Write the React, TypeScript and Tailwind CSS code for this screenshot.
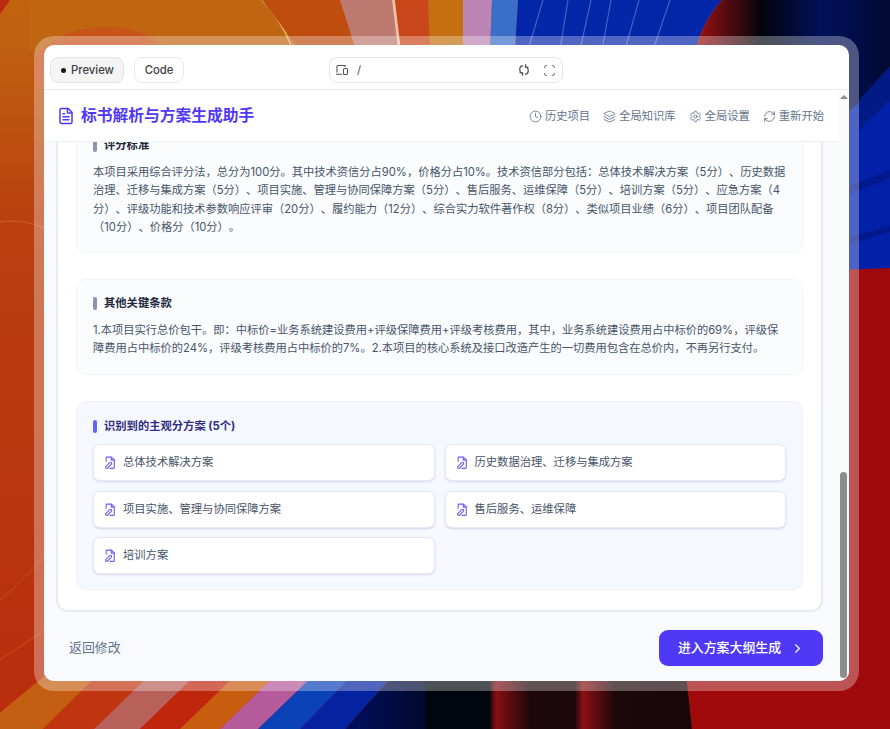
import { Clock, Layers, Settings, RefreshCw, FileText, ChevronRight, Scan } from "lucide-react";

const topBands: [string, string][] = [
  ["#bf4d10", "262,0 340,0 356,50 300,50"],
  ["#bd7a70", "340,0 392,0 398,50 356,50"],
  ["#e8c0b0", "392,0 395,0 401,50 398,50"],
  ["#c9471a", "395,0 428,0 430,50 401,50"],
  ["#c46f12", "428,0 463,0 463,50 430,50"],
  ["#bd85b5", "463,0 492,0 490,50 463,50"],
  ["#3b6ec9", "492,0 518,0 515,50 490,50"],
];
const bottomBands: [string, string][] = [
  ["#c45e12", "58,665 108,665 43,729 -20,729"],
  ["#c0350f", "108,665 160,665 94,729 43,729"],
  ["#b8605a", "160,665 206,665 140,729 94,729"],
  ["#c0260c", "206,665 246,665 180,729 140,729"],
  ["#c85c0f", "246,665 286,665 220,729 180,729"],
  ["#b55a9a", "286,665 324,665 258,729 220,729"],
  ["#0b42b8", "324,665 362,665 300,729 258,729"],
  ["#0522a0", "362,665 402,665 345,729 300,729"],
];
const blueLines = ["543,0 528,50", "568,0 560,50", "591,0 580,50", "611,0 602,50", "639,0 625,50", "670,0 653,50"];

function Background() {
  return (
    <svg className="absolute inset-0" width="890" height="729" viewBox="0 0 890 729">
      <defs>
        <linearGradient id="lo" x1="0" y1="0" x2="0" y2="1">
          <stop offset="0" stopColor="#c2620f" />
          <stop offset="0.06" stopColor="#c06010" />
          <stop offset="0.3" stopColor="#b9400f" />
          <stop offset="1" stopColor="#b92d0d" />
        </linearGradient>
        <linearGradient id="tr" x1="0" y1="0" x2="1" y2="0">
          <stop offset="0" stopColor="#a01012" />
          <stop offset="1" stopColor="#04060c" />
        </linearGradient>
        <linearGradient id="tn" x1="0" y1="0" x2="1" y2="0">
          <stop offset="0" stopColor="#02040c" />
          <stop offset="0.45" stopColor="#011058" />
          <stop offset="0.7" stopColor="#010d4c" />
          <stop offset="1" stopColor="#020a30" />
        </linearGradient>
        <linearGradient id="bn" x1="0" y1="0" x2="1" y2="0">
          <stop offset="0" stopColor="#010f62" />
          <stop offset="1" stopColor="#01060e" />
        </linearGradient>
        <linearGradient id="bs" x1="0" y1="0" x2="1" y2="0">
          <stop offset="0" stopColor="#1a0508" />
          <stop offset="0.03" stopColor="#861014" />
          <stop offset="0.2" stopColor="#1c070a" />
          <stop offset="0.42" stopColor="#1c070a" />
          <stop offset="0.46" stopColor="#8c1014" />
          <stop offset="0.62" stopColor="#1c070a" />
          <stop offset="1" stopColor="#1a0608" />
        </linearGradient>
      </defs>
      <rect width="890" height="729" fill="url(#lo)" />
      <path d="M30 0H262L300 50H30Z" fill="#c06510" />
      <path d="M0 0H10L0 14Z" fill="#bb2a10" />
      <ellipse cx="105" cy="72" rx="72" ry="45" fill="#c8541a" />
      <path d="M262 0C276 16 288 32 296 60" stroke="#e6b060" strokeWidth="1.5" fill="none" />
      {topBands.map(([c, p]) => (
        <polygon key={p} points={p} fill={c} />
      ))}
      <path d="M518 0H722C708 16 700 32 696 50H515Z" fill="#0426a8" />
      {blueLines.map((p) => (
        <polyline key={p} points={p} stroke="#3f63c4" strokeWidth="1.2" fill="none" />
      ))}
      <path d="M722 0H760V50H696C700 32 708 16 722 0Z" fill="url(#tr)" />
      <rect x="760" y="0" width="130" height="120" fill="url(#tn)" />
      <path d="M840 118L890 78V282L840 296Z" fill="#0320a8" />
      <path d="M859 100L890 66V100L859 130Z" fill="#011a86" />
      <path d="M840 190L890 170V178L840 198ZM840 240L890 226V232L840 246Z" fill="#02188c" />
      <path d="M600 280L890 268V729H600Z" fill="#a00a0c" />
      <path d="M0 222C14 220 28 221 44 228" stroke="#cf6020" strokeWidth="1" fill="none" />
      <path d="M0 600C14 588 28 575 44 556M0 660C14 650 28 642 44 630" stroke="#c6501a" strokeWidth="1" fill="none" />
      {bottomBands.map(([c, p]) => (
        <polygon key={p} points={p} fill={c} />
      ))}
      <polygon points="402,665 470,665 430,729 345,729" fill="url(#bn)" />
      <rect x="425" y="665" width="70" height="64" fill="#01060e" />
      <polygon points="490,665 685,665 692,729 490,729" fill="url(#bs)" />
    </svg>
  );
}

function Bar({ color }: { color: string }) {
  return <span className={`h-[13px] w-[4px] shrink-0 rounded-full ${color}`} />;
}

function NavItem({ icon: Icon, label }: { icon: typeof Clock; label: string }) {
  return (
    <div className="flex items-center gap-[3px] text-[11.3px] text-[#64748b]">
      <Icon size={13} strokeWidth={1.6} />
      <span>{label}</span>
    </div>
  );
}

function PlanIcon() {
  return (
    <svg width="12" height="13" viewBox="0 0 14 15" fill="none" stroke="#6a5cf6" strokeWidth="1.3" strokeLinecap="round" strokeLinejoin="round">
      <path d="M2.5 6V2.2a1 1 0 0 1 1-1h5.2L12 4.5v8.8a1 1 0 0 1-1 1H7" />
      <path d="M8.5 1.4v3.3H12" />
      <path d="M2 12.3 6.6 7.7a1.3 1.3 0 0 1 1.9 1.9L3.9 14.2H2Z" />
    </svg>
  );
}

function PlanCard({ label }: { label: string }) {
  return (
    <div className="flex h-[37px] items-center gap-[7px] rounded-[7px] border border-[#e5e9f5] bg-white pl-[10px] text-[11.3px] text-[#475569] shadow-[0_1px_2px_rgba(99,102,160,0.22)]">
      <PlanIcon />
      <span>{label}</span>
    </div>
  );
}

export default function App() {
  return (
    <div className="relative h-[729px] w-full overflow-hidden font-['Inter','Noto_Sans_CJK_SC',sans-serif] [text-spacing-trim:space-all]">
      <Background />
      <div className="relative pl-[34px] pt-[36px]">
        <div className="w-[825px] rounded-[20px] bg-white/30 px-[10px] pb-[10px] pt-[9px]">
          <div className="flex h-[636px] flex-col overflow-hidden rounded-[10px] bg-white">
            <div className="relative flex h-[45px] shrink-0 items-center border-b border-[#e8e9ec] pl-[6px] pt-[6px]">
              <div className="flex h-[26px] w-[74px] items-center gap-[5px] rounded-[8px] border border-[#e4e4e7] bg-[#f4f4f5] pl-[10px] text-[11.3px] font-medium text-[#3f3f46]">
                <span className="h-[5px] w-[5px] rounded-full bg-[#18181b]" />
                Preview
              </div>
              <div className="ml-[10px] flex h-[26px] w-[50px] items-center justify-center rounded-[8px] border border-[#e9e9eb] bg-white text-[11.3px] font-medium text-[#3f3f46]">
                Code
              </div>
              <div className="ml-[145px] flex h-[26px] w-[234px] items-center rounded-[8px] border border-[#e4e4e7] bg-white pl-[5px] pr-[5px] text-[#52525b]">
                <svg width="14" height="14" viewBox="0 0 14 14" fill="none" stroke="currentColor" strokeWidth="1.1">
                  <path d="M2 9.5V3.5a1 1 0 0 1 1-1h7v1.5M1 11.2h6" />
                  <rect x="8.5" y="5.5" width="4" height="6" rx="1" />
                </svg>
                <span className="ml-[8px] text-[11.3px]">/</span>
                <svg className="ml-auto" width="14" height="14" viewBox="0 0 14 14" fill="none" stroke="currentColor" strokeWidth="1.3">
                  <path d="M6 2.6C3.6 3 2.6 5 2.8 7c.1 1.3.8 2.5 1.7 3.3M8 11.4c2.4-.4 3.4-2.4 3.2-4.4-.1-1.3-.8-2.5-1.7-3.3" />
                  <path d="M8.6 1.2 8.4 4.2 11.4 4.4M5.4 12.8l.2-3L2.6 9.6" />
                </svg>
                <Scan size={13} strokeWidth={1.5} className="ml-[12px] mr-[1px]" />
              </div>
            </div>
            <div className="flex min-h-0 flex-1">
              <div className="flex min-w-0 flex-1 flex-col bg-[#f8fafe]">
                <div className="relative z-10 flex h-[52px] shrink-0 items-center justify-between border-b border-[#eef1f6] bg-white pl-[13px] pr-[14px] pt-[1px]">
                  <div className="flex items-center gap-[6px] text-[15.75px] font-bold text-[#4f39f6]">
                    <FileText size={18} strokeWidth={2} />
                    <span>标书解析与方案生成助手</span>
                  </div>
                  <div className="flex items-center gap-[13px]">
                    <NavItem icon={Clock} label="历史项目" />
                    <NavItem icon={Layers} label="全局知识库" />
                    <NavItem icon={Settings} label="全局设置" />
                    <NavItem icon={RefreshCw} label="重新开始" />
                  </div>
                </div>
                <div className="flex min-h-0 flex-1 flex-col justify-end overflow-hidden px-[12px] pb-[15px] pr-[15px]">
                  <div className="flex shrink-0 flex-col gap-[26.5px] rounded-[12px] border-x-2 border-b-2 border-[#e9ebf0] bg-white px-[18px] pb-[20px]">
                    <section className="-mb-[1px] rounded-[10px] border border-[#f1f4f9] bg-[#fbfcfe] px-[16px] pb-[16px] pt-[16px]">
                      <h3 className="flex h-[16px] items-center gap-[7px] text-[11.3px] font-bold text-[#1e293b]">
                        <Bar color="bg-[#8b93ad]" />
                        评分标准
                      </h3>
                      <p className="-mr-[2px] mt-[9px] text-[11.25px] leading-[18.36px] text-[#475569]">
                        本项目采用综合评分法，总分为100分。其中技术资信分占90%，价格分占10%。技术资信部分包括：总体技术解决方案（5分）、历史数据治理、迁移与集成方案（5分）、项目实施、管理与协同保障方案（5分）、售后服务、运维保障（5分）、培训方案（5分）、应急方案（4分）、评级功能和技术参数响应评审（20分）、履约能力（12分）、综合实力软件著作权（8分）、类似项目业绩（6分）、项目团队配备（10分）、价格分（10分）。
                      </p>
                    </section>
                    <section className="rounded-[10px] border border-[#f1f4f9] bg-[#fbfcfe] px-[16px] pb-[16px] pt-[16px]">
                      <h3 className="flex h-[16px] items-center gap-[7px] text-[11.3px] font-bold text-[#1e293b]">
                        <Bar color="bg-[#8b93ad]" />
                        其他关键条款
                      </h3>
                      <p className="mt-[9px] text-[11.25px] leading-[18.36px] text-[#475569]">
                        1.本项目实行总价包干。即：中标价=业务系统建设费用+评级保障费用+评级考核费用，其中，业务系统建设费用占中标价的69%，评级保障费用占中标价的24%，评级考核费用占中标价的7%。2.本项目的核心系统及接口改造产生的一切费用包含在总价内，不再另行支付。
                      </p>
                    </section>
                    <section className="rounded-[10px] border border-[#eef2fb] bg-[#f5f8fe] px-[16px] pb-[15px] pt-[16px]">
                      <h3 className="flex h-[16px] items-center gap-[7px] text-[11.3px] font-bold text-[#312e81]">
                        <Bar color="bg-[#6366f1]" />
                        识别到的主观分方案 (5个)
                      </h3>
                      <div className="mt-[10px] grid grid-cols-2 gap-x-[10px] gap-y-[9.5px]">
                        <PlanCard label="总体技术解决方案" />
                        <PlanCard label="历史数据治理、迁移与集成方案" />
                        <PlanCard label="项目实施、管理与协同保障方案" />
                        <PlanCard label="售后服务、运维保障" />
                        <PlanCard label="培训方案" />
                      </div>
                    </section>
                  </div>
                  <div className="mt-[18px] flex shrink-0 items-center justify-between">
                    <span className="ml-[13px] text-[12.9px] text-[#64748b]">返回修改</span>
                    <div className="flex h-[36px] w-[164px] items-center justify-center gap-[9px] rounded-[9px] bg-[#4f39f6] pl-[1px] text-[12.9px] font-medium text-white">
                      <span>进入方案大纲生成</span>
                      <ChevronRight size={15} strokeWidth={1.8} />
                    </div>
                  </div>
                </div>
              </div>
              <div className="flex w-[11px] shrink-0 flex-col items-center bg-[#fbfbfc] pt-[5px]">
                <span className="h-0 w-0 border-x-[4px] border-b-[4px] border-x-transparent border-b-[#8c8c8c]" />
                <span className="mb-[3px] mt-auto h-[206px] w-[7px] rounded-full bg-[#8c8c8c]" />
              </div>
            </div>
          </div>
        </div>
      </div>
    </div>
  );
}
